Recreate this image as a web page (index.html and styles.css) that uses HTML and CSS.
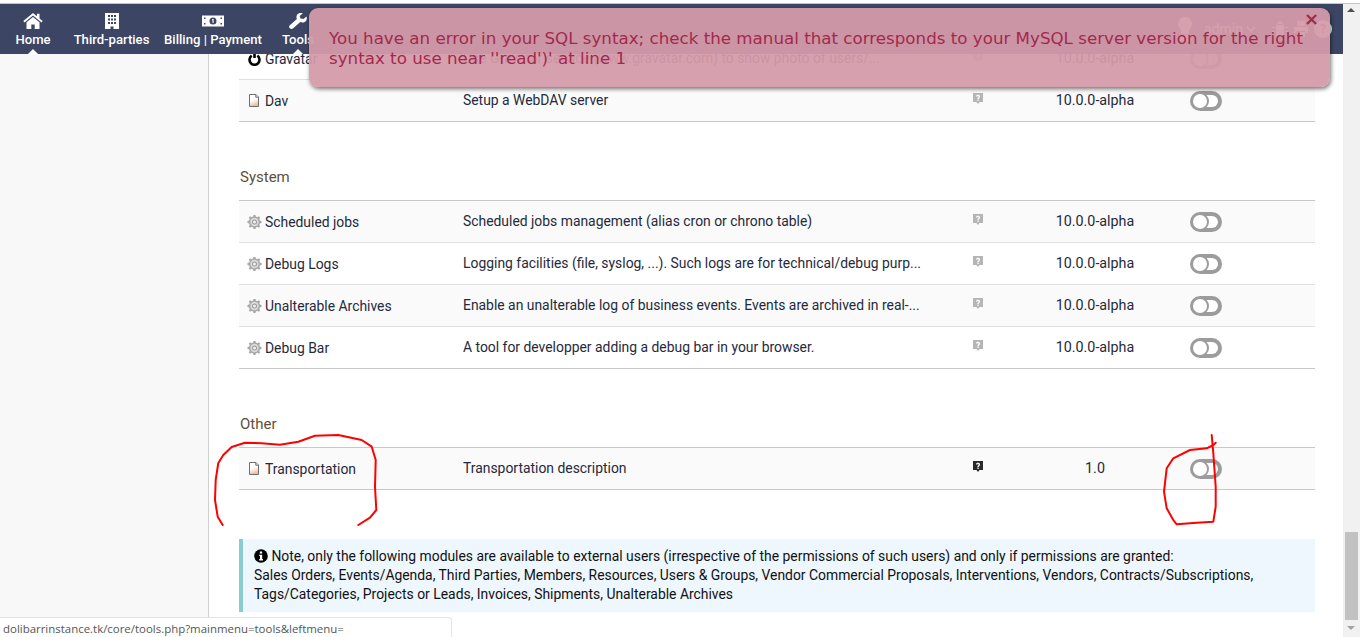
FILE: index.html
```html
<!DOCTYPE html>
<html lang="en">
<head>
<meta charset="utf-8">
<title>Modules</title>
<link rel="stylesheet" href="styles.css">
</head>
<body>
<div class="topline"></div>
<div class="window">
  <div class="page">
    <header class="topbar">
      <nav class="menu">
        <a class="menu-item item-home"><svg class="menu-icon" viewBox="0 0 20 16"><path d="M10 0 0.300 8 1.500 9.400 10 2.400l8.500 7 1.200-1.400-3.200-2.600V.800h-2.600v2.400zM3.500 9.300V16H8.300V11.500H11.700V16H16.500V9.300L10 4z"/></svg><span>Home</span></a>
        <a class="menu-item item-third"><svg class="menu-icon" viewBox="0 0 20 16"><path fill-rule="evenodd" d="M3 0H17V16H11.500V13.500H8.500V16H3zM6 2H8V4H6zM9 2H11V4H9zM12 2H14V4H12zM6 5.500H8V7.500H6zM9 5.500H11V7.500H9zM12 5.500H14V7.500H12zM6 9H8V11H6zM9 9H11V11H9zM12 9H14V11H12z"/></svg><span>Third-parties</span></a>
        <a class="menu-item item-bill"><svg class="menu-icon money" viewBox="0 0 22 16"><path fill-rule="evenodd" d="M0 2.500H22V13.500H0zM2 4.500V6H3.500V4.500zM18.500 4.500V6H20V4.500zM2 10V11.500H3.500V10zM18.500 10V11.500H20V10zM11 4.500A3.500 3.500 0 1 0 11 11.500A3.500 3.500 0 1 0 11 4.500z"/><path d="M10 6.200 11.600 5.800V10H10.500V7.200L10 7.300z"/></svg><span>Billing | Payment</span></a>
        <a class="menu-item item-tools"><svg class="menu-icon" viewBox="0 0 18 16"><path d="M17.500 3.400 14.500 6.100 11.500 5.400 10.700 2.900 13.800 .300C11.500-.300 9 .300 8 2 7.200 3.400 7.300 4.800 7.900 6L.800 12.300C-.200 13.200-.200 14.500.800 15.300 1.800 16.200 3.200 16.200 4.200 15.300L11.300 9C12.700 9.500 14.300 9.600 15.700 8.900 17.700 7.900 18.300 5.500 17.500 3.400z"/></svg><span>Tools</span></a>
      </nav>
      <div class="usertools">
        <svg class="user-icon" viewBox="0 0 16 24"><path d="M8 0a7 7 0 0 0-4 12.700V17H12V12.700A7 7 0 0 0 8 0zM2 18H14V24H2z"/></svg>
        <span class="user-name">admin</span>
        <svg class="user-chev" viewBox="0 0 10 6"><path d="M1 1 5 5 9 1" fill="none" stroke="#fff" stroke-width="1.400"/></svg>
        <svg class="tool-icon" viewBox="0 0 16 16"><path d="M5 3a3 3 0 0 1 6 0zM4 4H12V13A4 4 0 0 1 4 13zM0 6H3V7H0zM13 6H16V7H13zM0 10H3V11H0zM13 10H16V11H13z"/></svg>
        <svg class="tool-icon" viewBox="0 0 16 16"><path d="M4 0H12V5H4zM1 6H15V12H12.500V10H3.500V12H1zM4 11H12V16H4z"/></svg>
        <span class="help-dot">?</span>
      </div>
    </header>

    <div class="body-row">
      <aside class="sidebar"></aside>
      <main class="content">
        <section class="modules first">
          <div class="row plain">
            <div class="name"><svg class="ico" viewBox="0 0 14 14"><path fill="none" stroke="#000" stroke-width="2.600" d="M4.200 3.600A5 5 0 1 0 9.800 3.600"/><path d="M5.700 0H8.300V6H5.700z"/></svg><span>Gravatar</span></div>
            <div class="desc">Use Gravatar service (www.gravatar.com) to show photo of users/...</div>
            <div class="help"><svg class="bubble" viewBox="0 0 10 11"><use href="#q"/></svg></div>
            <div class="ver">10.0.0-alpha</div>
            <div class="tog"><span class="toggle"></span></div>
          </div>
          <div class="row shade">
            <div class="name"><svg class="doc" viewBox="0 0 10 13"><use href="#doc"/></svg><span>Dav</span></div>
            <div class="desc">Setup a WebDAV server</div>
            <div class="help"><svg class="bubble" viewBox="0 0 10 11"><use href="#q"/></svg></div>
            <div class="ver">10.0.0-alpha</div>
            <div class="tog"><span class="toggle"></span></div>
          </div>
        </section>

        <h2 class="group group-system">System</h2>
        <section class="modules">
          <div class="row shade">
            <div class="name"><svg class="ico" viewBox="0 0 14 14"><use href="#gear"/></svg><span>Scheduled jobs</span></div>
            <div class="desc">Scheduled jobs management (alias cron or chrono table)</div>
            <div class="help"><svg class="bubble" viewBox="0 0 10 11"><use href="#q"/></svg></div>
            <div class="ver">10.0.0-alpha</div>
            <div class="tog"><span class="toggle"></span></div>
          </div>
          <div class="row plain">
            <div class="name"><svg class="ico" viewBox="0 0 14 14"><use href="#gear"/></svg><span>Debug Logs</span></div>
            <div class="desc">Logging facilities (file, syslog, ...). Such logs are for technical/debug purp...</div>
            <div class="help"><svg class="bubble" viewBox="0 0 10 11"><use href="#q"/></svg></div>
            <div class="ver">10.0.0-alpha</div>
            <div class="tog"><span class="toggle"></span></div>
          </div>
          <div class="row shade">
            <div class="name"><svg class="ico" viewBox="0 0 14 14"><use href="#gear"/></svg><span>Unalterable Archives</span></div>
            <div class="desc">Enable an unalterable log of business events. Events are archived in real-...</div>
            <div class="help"><svg class="bubble" viewBox="0 0 10 11"><use href="#q"/></svg></div>
            <div class="ver">10.0.0-alpha</div>
            <div class="tog"><span class="toggle"></span></div>
          </div>
          <div class="row plain">
            <div class="name"><svg class="ico" viewBox="0 0 14 14"><use href="#gear"/></svg><span>Debug Bar</span></div>
            <div class="desc">A tool for developper adding a debug bar in your browser.</div>
            <div class="help"><svg class="bubble" viewBox="0 0 10 11"><use href="#q"/></svg></div>
            <div class="ver">10.0.0-alpha</div>
            <div class="tog"><span class="toggle"></span></div>
          </div>
        </section>

        <h2 class="group group-other">Other</h2>
        <section class="modules">
          <div class="row shade">
            <div class="name"><svg class="doc" viewBox="0 0 10 13"><use href="#doc"/></svg><span>Transportation</span></div>
            <div class="desc">Transportation description</div>
            <div class="help"><svg class="bubble dark" viewBox="0 0 10 11"><use href="#q"/></svg></div>
            <div class="ver">1.0</div>
            <div class="tog"><span class="toggle"></span></div>
          </div>
        </section>

        <div class="note">
          <div><svg class="info" viewBox="0 0 14 14"><circle cx="7" cy="7" r="6.800"/><path fill="#fff" d="M5.800 2.600H8.200V4.600H5.800zM5.200 5.700H8.200V10H9V11.400H5.200V10H6V7H5.200z"/></svg> Note, only the following modules are available to external users (irrespective of the permissions of such users) and only if permissions are granted:</div>
          <div>Sales Orders, Events/Agenda, Third Parties, Members, Resources, Users &amp; Groups, Vendor Commercial Proposals, Interventions, Vendors, Contracts/Subscriptions,</div>
          <div>Tags/Categories, Projects or Leads, Invoices, Shipments, Unalterable Archives</div>
        </div>
      </main>
    </div>
  </div>
  <div class="scrollbar">
    <span class="arrow up"></span>
    <div class="track"><div class="thumb"></div></div>
    <span class="arrow down"></span>
  </div>
</div>

<div class="jnotify">
  <p>You have an error in your SQL syntax; check the manual that corresponds to your MySQL server version for the right syntax to use near ''read')' at line 1</p>
  <span class="jclose">×</span>
</div>

<div class="statusbar">dolibarrinstance.tk/core/tools.php?mainmenu=tools&amp;leftmenu=</div>

<svg class="scribble" viewBox="0 0 1360 637">
  <polyline points="222.700,525 217.700,516.700 215,500 215.700,480 218.300,463 223.300,455 231.700,447 245,442.700 261.700,443.300 280,444.700 298.300,441.700 315,435.700 338.300,435 361.700,440 371.700,446.700 375.700,460 375,486.700 376.300,510 370,517.700 358.300,525"/>
  <polyline points="1211.700,435 1213.300,453 1215.700,486.700 1215.700,506.700 1213.300,521.700 1196.700,522.700 1176.700,524.300 1173.300,520 1166.700,508.300 1164,491.700 1166.700,468.300 1173.300,458.300 1190,450 1206.700,448.300 1213.300,445 1215.700,442.700"/>
  <defs>
    <linearGradient id="docfill" x1="0" y1="0" x2="0.300" y2="1">
      <stop offset="0.550" stop-color="#ffffff"/>
      <stop offset="1" stop-color="#eebd94"/>
    </linearGradient>
    <g id="q"><path fill-rule="evenodd" d="M0 0H10V9H6.500L5 11 3.500 9H0zM2.900 3.600H4.300C4.300 2.700 5.700 2.700 5.700 3.500 5.700 4.300 4.400 4.400 4.400 6H5.700C5.700 4.900 7.100 4.800 7.100 3.400 7.100 1.200 2.900 1.300 2.900 3.600zM4.400 6.600H5.700V8H4.400z"/></g>
    <g id="doc"><path d="M.5 .5H7L9.500 3V12.500H.5z" fill="url(#docfill)" stroke="#6e6e6e" stroke-width="1"/><path d="M6.800 .5V3.200H9.500" fill="#e8e8e8" stroke="#6e6e6e" stroke-width="1"/></g>
    <g id="gear"><path fill="#a8a8a8" fill-rule="evenodd" d="M6 0H8L8.400 1.600 9.900 2.200 11.400 1.300 12.700 2.600 11.800 4.100 12.400 5.600 14 6V8L12.400 8.400 11.800 9.900 12.700 11.400 11.400 12.700 9.900 11.800 8.400 12.400 8 14H6L5.600 12.400 4.100 11.800 2.600 12.700 1.300 11.400 2.200 9.900 1.600 8.400 0 8V6L1.600 5.600 2.200 4.100 1.300 2.600 2.600 1.300 4.100 2.200 5.600 1.600z"/><circle cx="7" cy="7" r="4.200" fill="#dcdcdc" stroke="none"/><circle cx="7" cy="7" r="2.500" fill="#9a9a9a" stroke="none"/><circle cx="7" cy="7" r="1.500" fill="#f2f2f2" stroke="none"/></g>
  </defs>
</svg>
</body>
</html>
```
FILE: styles.css
```css
* { box-sizing: border-box; }
html, body { margin: 0; height: 637px; overflow: hidden; background: #fff; }
body { font-family: Roboto, "Liberation Sans", sans-serif; font-size: 13.900px; color: #1f2a3c; position: relative; }
.topline { height: 4px; background: #fff; border-bottom: 1px solid #c4c4c4; }
.window { display: flex; height: 633px; }
.page { position: relative; width: 1343px; overflow: hidden; }
.topbar { position: absolute; left: 0; top: 0; right: 0; height: 50px; background: #3c4664; display: flex; justify-content: space-between; z-index: 2; color: #fff; }
.menu { display: flex; }
.menu-item { position: relative; display: flex; flex-direction: column; align-items: center; font-weight: 500; font-size: 13.100px; color: #fff; white-space: nowrap; padding-top: 9px; }
.menu-item span { line-height: 20px; margin-top: 1px; }
.menu-icon { width: 20px; height: 16px; fill: #fff; display: block; }
.money { width: 22px; }
.item-home { width: 66px; }
.item-third { width: 91px; }
.item-bill { width: 112px; }
.item-tools { width: 58px; }
.item-home::after, .item-tools::after { content: ""; position: absolute; left: 50%; bottom: 0; margin-left: -5px; border: 5px solid transparent; border-top: 0; border-bottom-color: #fff; }
.usertools { display: flex; align-items: center; gap: 5px; padding-right: 11px; }
.user-icon { width: 16px; height: 24px; fill: #fff; margin-right: 6px; }
.user-name { font-size: 14px; margin-right: -2px; }
.user-chev { width: 10px; height: 6px; margin-right: 11px; }
.tool-icon { width: 16px; height: 16px; fill: #fff; }
.help-dot { width: 18px; height: 18px; border-radius: 50%; background: #fff; color: #3c4664; text-align: center; font-weight: 700; line-height: 18px; font-size: 13px; }
.body-row { display: flex; height: 100%; }
.sidebar { width: 209px; flex: none; background: #f8f8f8; border-right: 1px solid #cfcfcf; }
.content { width: 1106px; padding: 34px 0 0 30px; flex: none; }
.row { display: grid; grid-template-columns: 224px 510px 62px 120px 1fr; align-items: center; height: 42px; padding-bottom: 2px; border-bottom: 1px solid #e0e0e0; }
.row:last-child { border-bottom-color: #c8c8c8; }
.shade { background: #fafafa; }
.plain { background: #fff; }
.modules { border-top: 1px solid #c8c8c8; }
.modules.first { border-top: 0; }
.name { display: flex; align-items: center; padding-left: 8px; padding-top: 2px; gap: 3px; white-space: nowrap; }
.ico { width: 15px; height: 14px; flex: none; display: block; }
.doc { width: 10px; height: 13px; flex: none; display: block; margin: 0 3px 0 2px; }
.desc { white-space: nowrap; overflow: hidden; }
.help { line-height: 0; }
.bubble { width: 10px; height: 11px; fill: #b5b5b5; margin-bottom: 3px; }
.bubble.dark { fill: #2a2a2a; }
.ver { text-align: center; font-size: 14.300px; }
.tog { padding: 2px 0 0 35px; line-height: 0; }
.toggle { position: relative; display: inline-block; width: 32px; height: 20px; border-radius: 10px; background: #9c9c9c; }
.toggle::before { content: ""; position: absolute; right: 4px; top: 4px; width: 17px; height: 12px; border-radius: 6px; background: #fff; }
.toggle::after { content: ""; position: absolute; left: 3px; top: 3px; width: 14px; height: 14px; border-radius: 50%; background: #fff; box-shadow: 0 0 0 2px #9c9c9c; }
.group { margin: 0; font-size: 15px; font-weight: 400; line-height: 20px; color: #5f5034; padding-left: 1px; }
.group-system { margin-top: 45px; padding-bottom: 13px; }
.group-other { margin-top: 45px; padding-bottom: 13px; }
.note { margin-top: 49px; width: 1076px; height: 73px; padding: 8px 0 0 11px; background: #eef7fd; border-left: 4px solid #8accd0; line-height: 19px; color: #111; white-space: nowrap; }
.info { width: 14px; height: 14px; vertical-align: -2px; }
.scrollbar { width: 17px; flex: none; background: #f1f1f1; display: flex; flex-direction: column; align-items: center; }
.arrow { flex: none; display: block; height: 17px; width: 17px; position: relative; }
.arrow::after { content: ""; position: absolute; left: 4px; border: 4px solid transparent; }
.up::after { top: 4px; border-top: 0; border-bottom-color: #505050; }
.down::after { top: 6px; border-bottom: 0; border-top-color: #a3a3a3; }
.track { flex: 1; width: 100%; padding: 0 2px; display: flex; flex-direction: column; justify-content: flex-end; }
.thumb { height: 88px; background: #c1c1c1; }
.jnotify { position: absolute; left: 309px; top: 8px; width: 1021px; height: 79px; border-radius: 9px; background: rgba(213, 154, 169, 0.94); box-shadow: 1px 2px 4px rgba(0, 0, 0, .55); z-index: 5; color: #a3294c; font-family: "DejaVu Sans", sans-serif; font-size: 16.700px; }
.jnotify p { margin: 0; padding: 20px 15px 0 20px; line-height: 20px; }
.jclose { position: absolute; right: 11px; top: 1px; font-size: 18px; font-weight: 700; line-height: 20px; color: #a3294c; }
.statusbar { position: absolute; left: 0; bottom: 0; width: 452px; height: 20px; background: #fff; border: 1px solid #e4e4e4; border-left: 0; border-bottom: 0; border-top-right-radius: 3px; padding: 2px 0 0 3px; font-size: 11.450px; line-height: 18px; color: #555; z-index: 6; font-family: "Open Sans", sans-serif; }
.scribble { position: absolute; left: 0; top: 0; width: 1360px; height: 637px; z-index: 4; pointer-events: none; fill: none; stroke: #f00; stroke-width: 2; stroke-linejoin: round; stroke-linecap: round; }
```
